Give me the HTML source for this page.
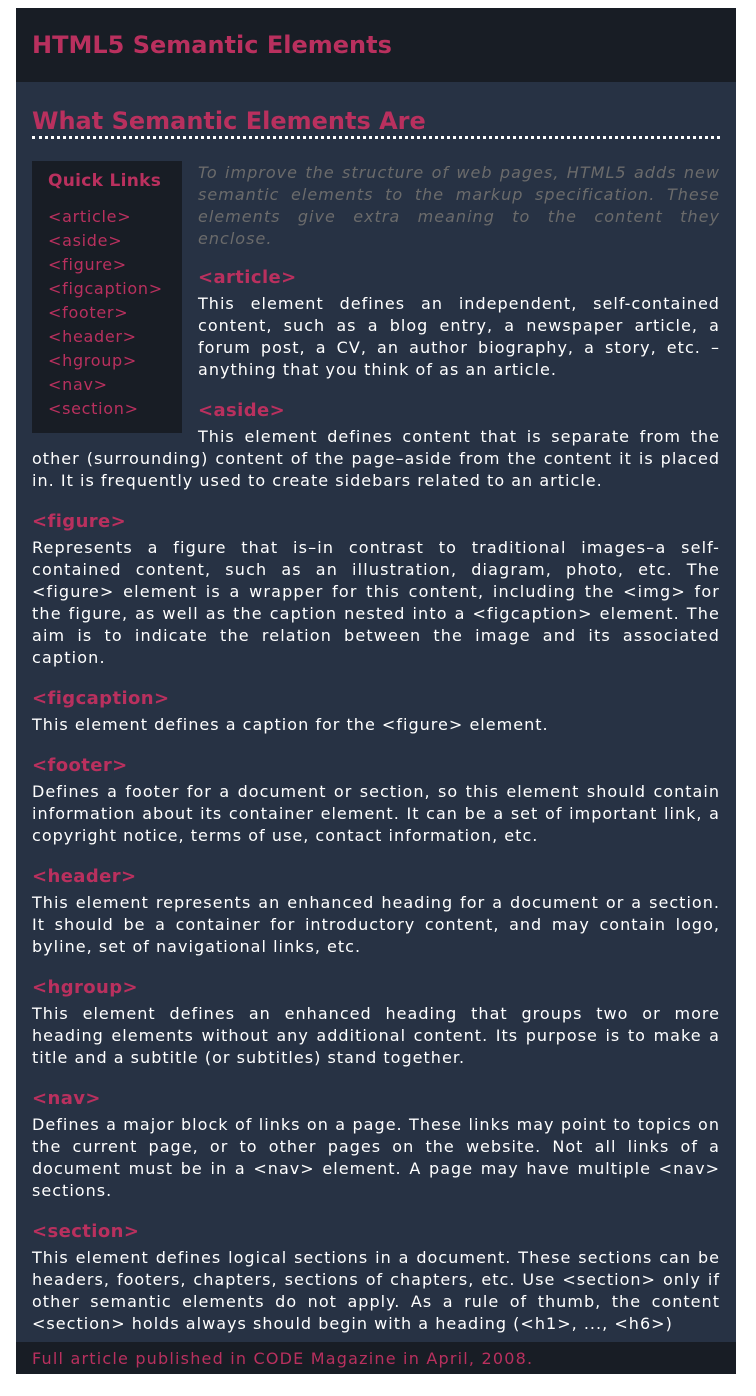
<!DOCTYPE html>
<html><head><meta charset="utf-8"><style>
html,body{margin:0;padding:0;background:#fff}
body{font-family:"DejaVu Sans","Liberation Sans",sans-serif;width:756px;height:1396px;overflow:hidden}
.wrap{position:absolute;left:16px;top:8px;width:720px;background:#273244;color:#fff}
header{background:#181d25;height:74px;padding:0 16px;box-sizing:border-box}
header h1{margin:0;font-size:24px;line-height:74px;color:#b9305e;font-weight:bold}
main{padding:0 16px 7px}
h2{margin:0;padding-top:24px;font-size:24px;line-height:30px;color:#b9305e;border-bottom:3px dotted #fff;padding-bottom:0}
.ql{float:left;width:150px;box-sizing:border-box;background:#181d25;margin:22px 16px 0 0;padding:8px 16px 10px;height:272px}
.ql h4{margin:0 0 12px;color:#b9305e;font-size:17px;line-height:24px;letter-spacing:0.3px}
.ql div{color:#b9305e;font-size:16px;line-height:24px;letter-spacing:0.7px}
p{margin:0;font-size:16px;line-height:22px;text-align:justify;letter-spacing:1.02px}
p.intro{color:#6b6b6b;font-style:italic;margin-top:23px}
p.fig{letter-spacing:1.15px}
h3{margin:19px 0 4px;font-size:18px;line-height:22px;color:#b9305e;letter-spacing:0.4px}
h3.first{margin-top:17px}
footer{background:#181d25;height:32px;padding:0 16px;color:#b9305e;font-size:16px;line-height:34px;letter-spacing:1.2px}
</style></head><body><div class="wrap">
<header><h1>HTML5 Semantic Elements</h1></header>
<main>
<h2>What Semantic Elements Are</h2>
<div class="ql"><h4>Quick Links</h4>
<div>&lt;article&gt;</div><div>&lt;aside&gt;</div><div>&lt;figure&gt;</div><div>&lt;figcaption&gt;</div><div>&lt;footer&gt;</div><div>&lt;header&gt;</div><div>&lt;hgroup&gt;</div><div>&lt;nav&gt;</div><div>&lt;section&gt;</div></div>
<p class="intro">To improve the structure of web pages, HTML5 adds new semantic elements to the markup specification. These elements give extra meaning to the content they enclose.</p>
<h3 class="first">&lt;article&gt;</h3>
<p>This element defines an independent, self-contained content, such as a blog entry, a newspaper article, a forum post, a CV, an author biography, a story, etc. – anything that you think of as an article.</p>
<h3>&lt;aside&gt;</h3>
<p>This element defines content that is separate from the other (surrounding) content of the page–aside from the content it is placed in. It is frequently used to create sidebars related to an article.</p>
<h3>&lt;figure&gt;</h3>
<p class="fig">Represents a figure that is–in contrast to traditional images–a self-contained content, such as an illustration, diagram, photo, etc. The &lt;figure&gt; element is a wrapper for this content, including the &lt;img&gt; for the figure, as well as the caption nested into a &lt;figcaption&gt; element. The aim is to indicate the relation between the image and its associated caption.</p>
<h3>&lt;figcaption&gt;</h3>
<p>This element defines a caption for the &lt;figure&gt; element.</p>
<h3>&lt;footer&gt;</h3>
<p>Defines a footer for a document or section, so this element should contain information about its container element. It can be a set of important link, a copyright notice, terms of use, contact information, etc.</p>
<h3>&lt;header&gt;</h3>
<p>This element represents an enhanced heading for a document or a section. It should be a container for introductory content, and may contain logo, byline, set of navigational links, etc.</p>
<h3>&lt;hgroup&gt;</h3>
<p>This element defines an enhanced heading that groups two or more heading elements without any additional content. Its purpose is to make a title and a subtitle (or subtitles) stand together.</p>
<h3>&lt;nav&gt;</h3>
<p>Defines a major block of links on a page. These links may point to topics on the current page, or to other pages on the website. Not all links of a document must be in a &lt;nav&gt; element. A page may have multiple &lt;nav&gt; sections.</p>
<h3>&lt;section&gt;</h3>
<p>This element defines logical sections in a document. These sections can be headers, footers, chapters, sections of chapters, etc. Use &lt;section&gt; only if other semantic elements do not apply. As a rule of thumb, the content &lt;section&gt; holds always should begin with a heading (&lt;h1&gt;, ..., &lt;h6&gt;)</p>
</main>
<footer>Full article published in CODE Magazine in April, 2008.</footer>
</div></body></html>
